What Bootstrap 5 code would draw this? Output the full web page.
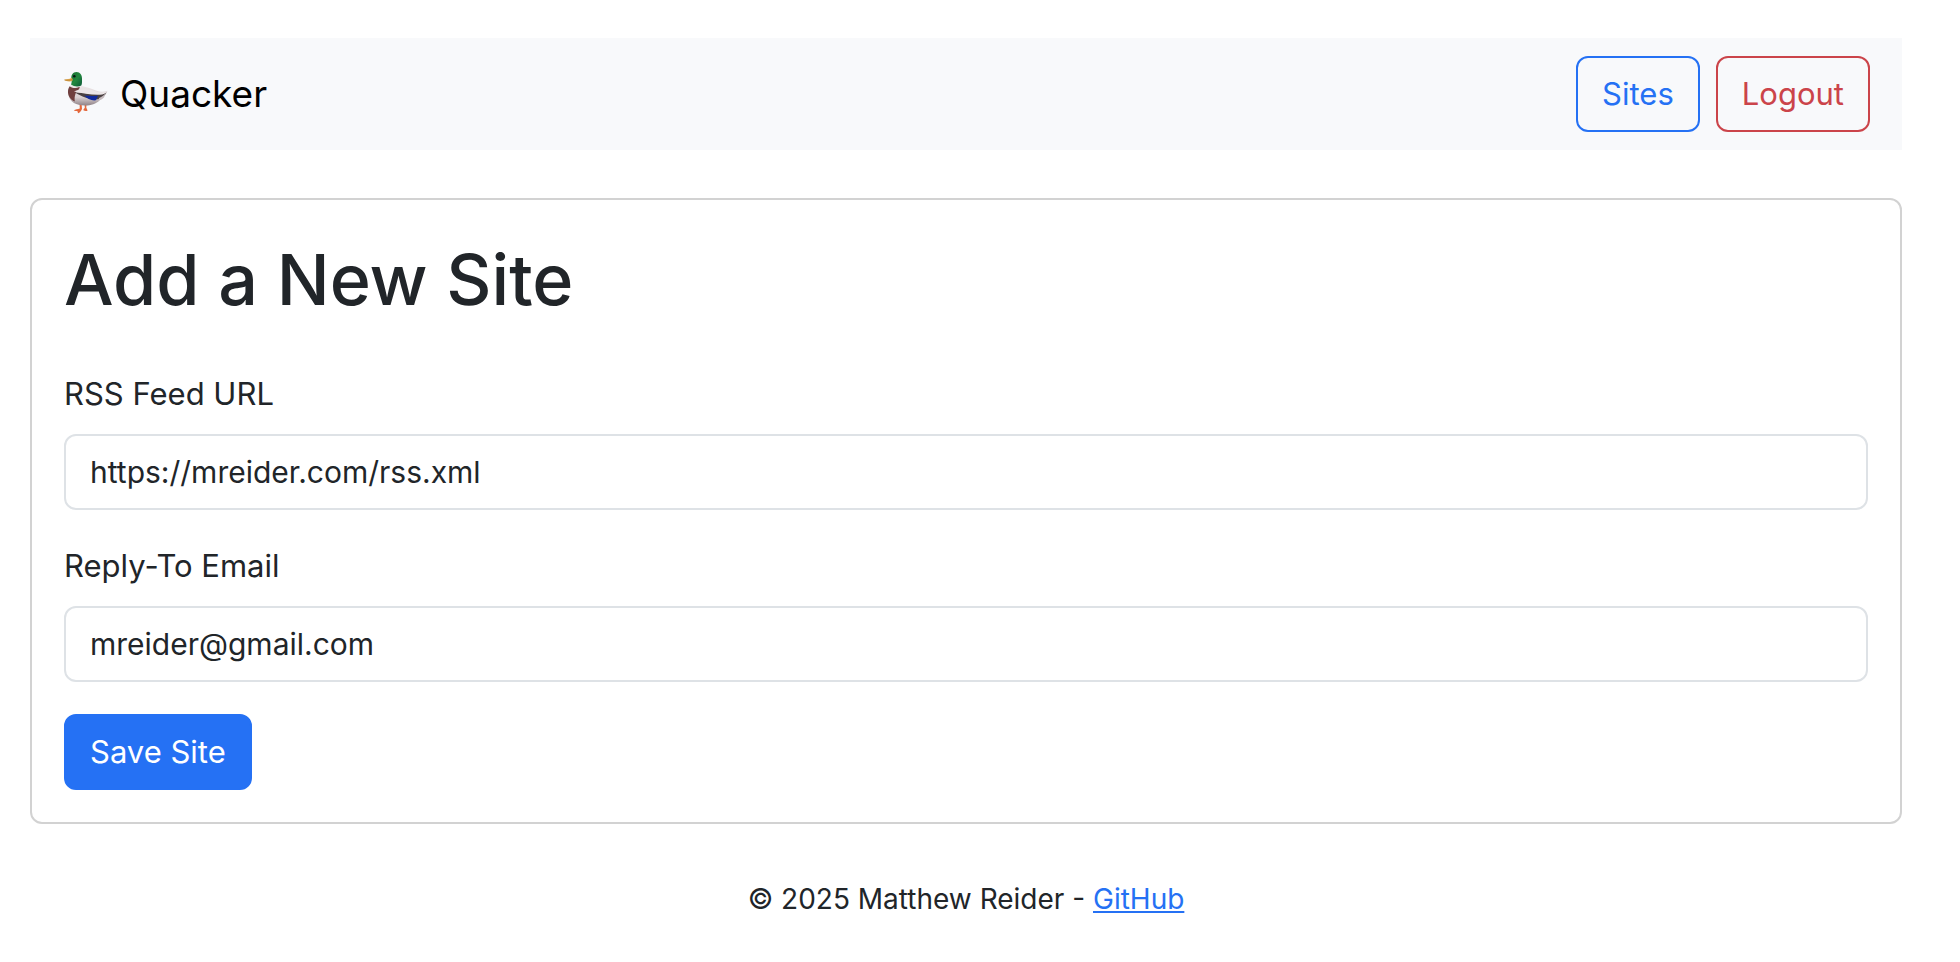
<!DOCTYPE html>
<html lang="en">
<head>
<meta charset="utf-8">
<meta name="viewport" content="width=device-width, initial-scale=1">
<title>Quacker - Add a New Site</title>
<link href="https://cdn.jsdelivr.net/npm/bootstrap@5.3.0/dist/css/bootstrap.min.css" rel="stylesheet">
<style>
  :root { font-size: 32px; }
  body { --bs-body-color: #212529; font-family: Inter, "Liberation Sans", sans-serif; font-size: 31px; line-height: 48px; }
  .page-shell { padding: 38px 58px 32px 30px; }
  .top-bar { background: #f8f9fb; min-height: 112px; margin-bottom: 48px; }
  .top-bar .container-fluid { padding: 0 32px; }
  .navbar-brand { font-size: 37px; line-height: 60px; color: #000; margin: 0; gap: 10px; }
  .duck { width: 48px; height: 48px; }
  .btn { --bs-btn-font-size: 31px; --bs-btn-line-height: 48px; --bs-btn-border-width: 2px; --bs-btn-border-radius: 12px; --bs-btn-padding-x: 24px; --bs-btn-padding-y: 12px; }
  .btn-primary { --bs-btn-bg: #2571f4; --bs-btn-border-color: #2571f4; }
  .btn-outline-primary { --bs-btn-color: #2571f4; --bs-btn-border-color: #2571f4; }
  .btn-outline-danger { --bs-btn-color: #cb444a; --bs-btn-border-color: #cb444a; }
  .card { --bs-card-border-width: 2px; --bs-card-border-color: #d2d2d2; --bs-card-border-radius: 12px; --bs-card-spacer-x: 32px; --bs-card-spacer-y: 32px; }
  .card h1 { font-size: 70px; line-height: 96px; margin-bottom: 42px; }
  .form-control { font-size: 30px; line-height: 48px; padding: 12px 24px; border: 2px solid #dee2e6; border-radius: 12px; }
  footer { font-size: 28px; line-height: 42px; padding-top: 54px; }
  footer a { color: #2571f4; }
</style>
</head>
<body>
<div class="page-shell">
  <nav class="navbar top-bar py-0">
    <div class="container-fluid flex-nowrap">
      <a class="navbar-brand d-flex align-items-center" href="#">
        <svg class="duck" viewBox="0 0 48 48" aria-hidden="true">
          <defs>
            <linearGradient id="body-shade" x1="0" y1="0" x2="0" y2="1"><stop offset="0" stop-color="#efe9ea"/><stop offset=".6" stop-color="#d9d0d2"/><stop offset="1" stop-color="#8f8286"/></linearGradient>
            <linearGradient id="head-shade" x1="0" y1="0" x2="1" y2="1"><stop offset="0" stop-color="#1c6f30"/><stop offset=".5" stop-color="#23893f"/><stop offset="1" stop-color="#0c5737"/></linearGradient>
          </defs>
          <path d="M17.500 33l.3 5.500c-2 .6-4.500.8-6 1.800 1 .7 2.600.7 3.500.8l.8 2.200c1.600-.6 3-2 3.900-4.300l-.5-6zM22.500 33l.3 5c-.9.6-1.400 1.500-1.400 2.200 1.300.8 3 1 4.200.2l-1.300-2.600.2-4.800z" fill="#e4683c"/>
          <path d="M8 17c3-2 8-2.500 12-1 5 1.500 10 2.500 14 4.500 4 1.600 8 1.500 11.500.2-1 4-4 6.500-7.500 9.300-4 4-9 5.500-15 5.500-9 0-15-3.500-16.500-10-.7-3-.2-6.500 1.500-8.500z" fill="url(#body-shade)"/>
          <path d="M8 16c3 2 6.500 1.700 9.500.2 1 3-2.700 4.300-3.900 7.300-1 2.500-1.200 5-.8 8C8 29.500 5.700 25.500 6 21c.1-2 .9-3.800 2-5z" fill="#70403f"/>
          <path d="M13 22.500c8 0 17 1.200 24 1.500 3 0 5.500-.7 7.500-1.800-1.500 3.400-4 5.800-8 7-9 .5-16-2-23.500-6.700z" fill="#4a4142"/>
          <path d="M22.500 25.500c4 .2 9 .7 13.500.300L34 30.300c-4.500.6-9-1.300-11.500-4.800z" fill="#112a9c"/>
          <path d="M12 21.500c6-3 14-3 21-.3 4 1.200 8 1.300 12 .2-1 1.800-4 3-7 3.300-9 .3-17-1.200-26-3.200z" fill="#ece6e7"/>
          <path d="M37 28c3-1 5.500-3 7-5.500l-2 5c-1.500 1.500-3.500 2.700-5.500 3z" fill="#c5babd"/>
          <path d="M9 14.500c2.500 2 7 2.400 10.300 0l-1.300 2.300c-3 1.600-7 1.500-10-.4z" fill="#ece8e6"/>
          <path d="M9.500 9c-.8-3.500 1.300-7 5-7S20 5 20 8.500c0 2.500.3 5-.7 7-3 1.700-7.300 1.300-10.300-.9.7-1.700.9-3.600.5-5.600z" fill="url(#head-shade)"/>
          <path d="M9.500 7.800C7.500 9.500 4.800 9 2.200 9.800c1.300 1.600 5.500 2.200 8 1.200 1-.8.500-2.500-.7-3.200z" fill="#dfa84e"/>
          <path d="M2.500 10c3 .5 5 .3 7.500-.3" stroke="#aa7428" stroke-width=".6" fill="none"/>
          <circle cx="12.300" cy="6.300" r="1.300" fill="#071b12"/>
        </svg>
        <span>Quacker</span>
      </a>
      <div class="d-flex">
        <a class="btn btn-outline-primary me-2" href="#">Sites</a>
        <button class="btn btn-outline-danger" type="button">Logout</button>
      </div>
    </div>
  </nav>

  <main class="card">
    <form class="card-body">
      <h1>Add a New Site</h1>
      <div class="mb-3">
        <label class="form-label" for="feed">RSS Feed URL</label>
        <input class="form-control" id="feed" type="url" value="https://mreider.com/rss.xml">
      </div>
      <div class="mb-3">
        <label class="form-label" for="email">Reply-To Email</label>
        <input class="form-control" id="email" type="email" value="mreider@gmail.com">
      </div>
      <button class="btn btn-primary" type="submit">Save Site</button>
    </form>
  </main>

  <footer class="text-center">&copy; 2025 Matthew Reider - <a href="#">GitHub</a></footer>
</div>
</body>
</html>
